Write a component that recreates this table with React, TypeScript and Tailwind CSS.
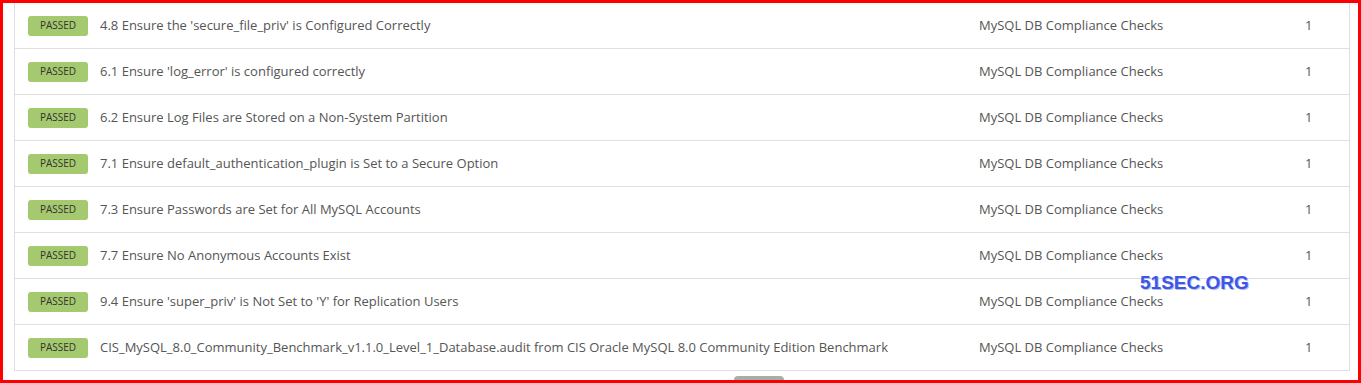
import React from "react";

const rows = [
  "4.8 Ensure the 'secure_file_priv' is Configured Correctly",
  "6.1 Ensure 'log_error' is configured correctly",
  "6.2 Ensure Log Files are Stored on a Non-System Partition",
  "7.1 Ensure default_authentication_plugin is Set to a Secure Option",
  "7.3 Ensure Passwords are Set for All MySQL Accounts",
  "7.7 Ensure No Anonymous Accounts Exist",
  "9.4 Ensure 'super_priv' is Not Set to 'Y' for Replication Users",
  "CIS_MySQL_8.0_Community_Benchmark_v1.1.0_Level_1_Database.audit from CIS Oracle MySQL 8.0 Community Edition Benchmark",
];

export default function App() {
  return (
    <div className="relative w-[1361px] h-[383px] overflow-hidden border-[3px] border-[#ff0000] bg-white font-['Open_Sans',sans-serif]">
      <div className="ml-[11px] mr-[8px] border-x border-[#dddfe1]">
        {rows.map((t, i) => (
          <div
            key={i}
            className="flex h-[46px] items-center border-b border-[#dddfe1] text-[13px] text-[#555555]"
          >
            <div className="w-[85px] shrink-0 pl-[13px]">
              <div className="flex h-[20px] w-[60px] items-center justify-center rounded-[3px] bg-[#a5c96f] text-[10px] text-[#333333]">
                PASSED
              </div>
            </div>
            <div className="w-[879px] shrink-0 whitespace-nowrap">{t}</div>
            <div className="w-[326px] shrink-0 whitespace-nowrap">MySQL DB Compliance Checks</div>
            <div className="flex-1">1</div>
          </div>
        ))}
      </div>
      <div className="absolute left-[731px] top-[373px] h-[4px] w-[50px] rounded-t-[4px] bg-[#a9aca9]" />
      <div className="absolute left-[1137px] top-[270px] text-[19px] leading-none font-bold text-[#3e55e6] font-['Liberation_Sans',sans-serif] [text-shadow:1px_1px_0_#aebcf2]">
        51SEC.ORG
      </div>
    </div>
  );
}
